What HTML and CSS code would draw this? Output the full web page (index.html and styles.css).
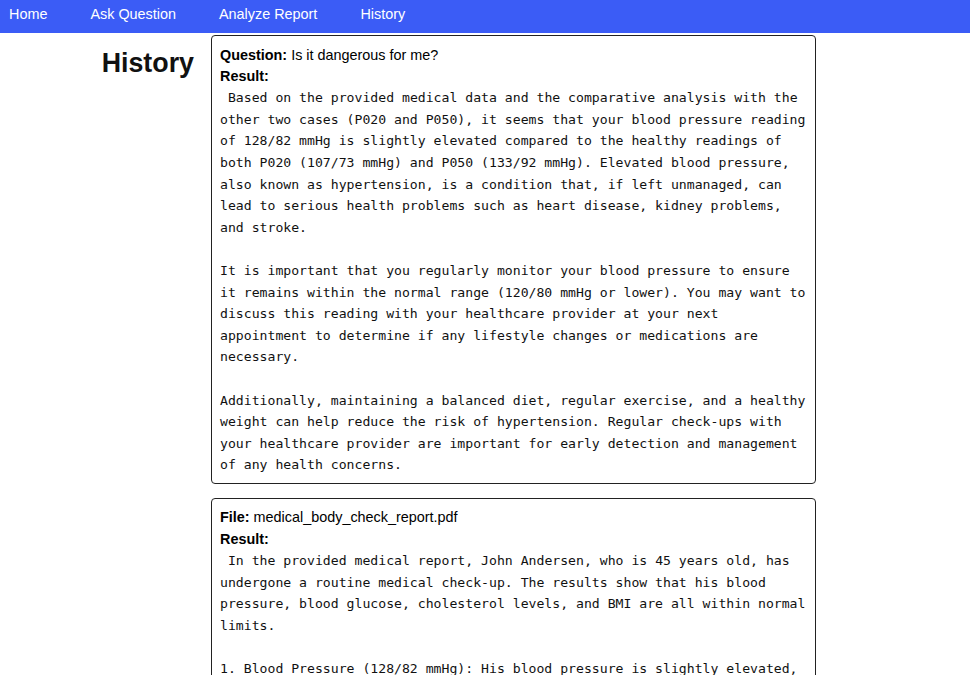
FILE: index.html
```html
<!DOCTYPE html>
<html>
<head>
<meta charset="utf-8">
<link rel="stylesheet" href="styles.css">
</head>
<body>
<nav class="nav">
  <a class="nav-link" href="#">Home</a>
  <a class="nav-link" href="#">Ask Question</a>
  <a class="nav-link" href="#">Analyze Report</a>
  <a class="nav-link" href="#">History</a>
</nav>
<main class="page">
  <div class="side"><h1 class="title">History</h1></div>
  <div class="list">
    <div class="card">
      <div class="meta"><b>Question:</b> Is it dangerous for me?</div>
      <div class="meta"><b>Result:</b></div>
      <div class="result"> Based on the provided medical data and the comparative analysis with the other two cases (P020 and P050), it seems that your blood pressure reading of 128/82 mmHg is slightly elevated compared to the healthy readings of both P020 (107/73 mmHg) and P050 (133/92 mmHg). Elevated blood pressure, also known as hypertension, is a condition that, if left unmanaged, can lead to serious health problems such as heart disease, kidney problems, and stroke.

It is important that you regularly monitor your blood pressure to ensure it remains within the normal range (120/80 mmHg or lower). You may want to discuss this reading with your healthcare provider at your next appointment to determine if any lifestyle changes or medications are necessary.

Additionally, maintaining a balanced diet, regular exercise, and a healthy weight can help reduce the risk of hypertension. Regular check-ups with your healthcare provider are important for early detection and management of any health concerns.</div>
    </div>
    <div class="card">
      <div class="meta"><b>File:</b> medical_body_check_report.pdf</div>
      <div class="meta"><b>Result:</b></div>
      <div class="result"> In the provided medical report, John Andersen, who is 45 years old, has undergone a routine medical check-up. The results show that his blood pressure, blood glucose, cholesterol levels, and BMI are all within normal limits.

1. Blood Pressure (128/82 mmHg): His blood pressure is slightly elevated, but it is still within the acceptable range. Regular monitoring is advised.

2. Blood Glucose (92 mg/dL): His fasting blood glucose is within the normal range.</div>
    </div>
  </div>
</main>
</body>
</html>
```

FILE: styles.css
```css
html, body {
  margin: 0;
  padding: 0;
  background: #fff;
}
body {
  font-family: "Liberation Sans", Arial, sans-serif;
  font-size: 14.4px;
  line-height: 21.6px;
  color: #000;
}
.nav {
  background: #3b5cf6;
  height: 33px;
  box-sizing: border-box;
  padding: 3.5px 0 0 9px;
  display: flex;
  gap: 43px;
}
.nav-link {
  color: #fff;
  text-decoration: none;
  font-size: 14.4px;
}
.page {
  display: flex;
  align-items: flex-start;
  gap: 17px;
  padding: 2px 8px 0 8px;
}
.side {
  width: 186px;
  text-align: right;
  flex: none;
}
.title {
  margin: 8px 0 0 0;
  font-size: 26.8px;
  line-height: 40px;
  font-weight: bold;
  color: #111;
}
.list {
  width: 605px;
  flex: none;
}
.card {
  border: 1px solid #222;
  border-radius: 4px;
  padding: 8.5px 7.2px 7px 8px;
  margin-bottom: 14px;
}
.meta b {
  font-weight: bold;
}
.result {
  margin-top: -0.5px;
  white-space: pre-wrap;
  font-family: "DejaVu Sans Mono", "Liberation Mono", monospace;
  font-size: 13.15px;
  line-height: 21.6px;
  color: #111;
}
```
